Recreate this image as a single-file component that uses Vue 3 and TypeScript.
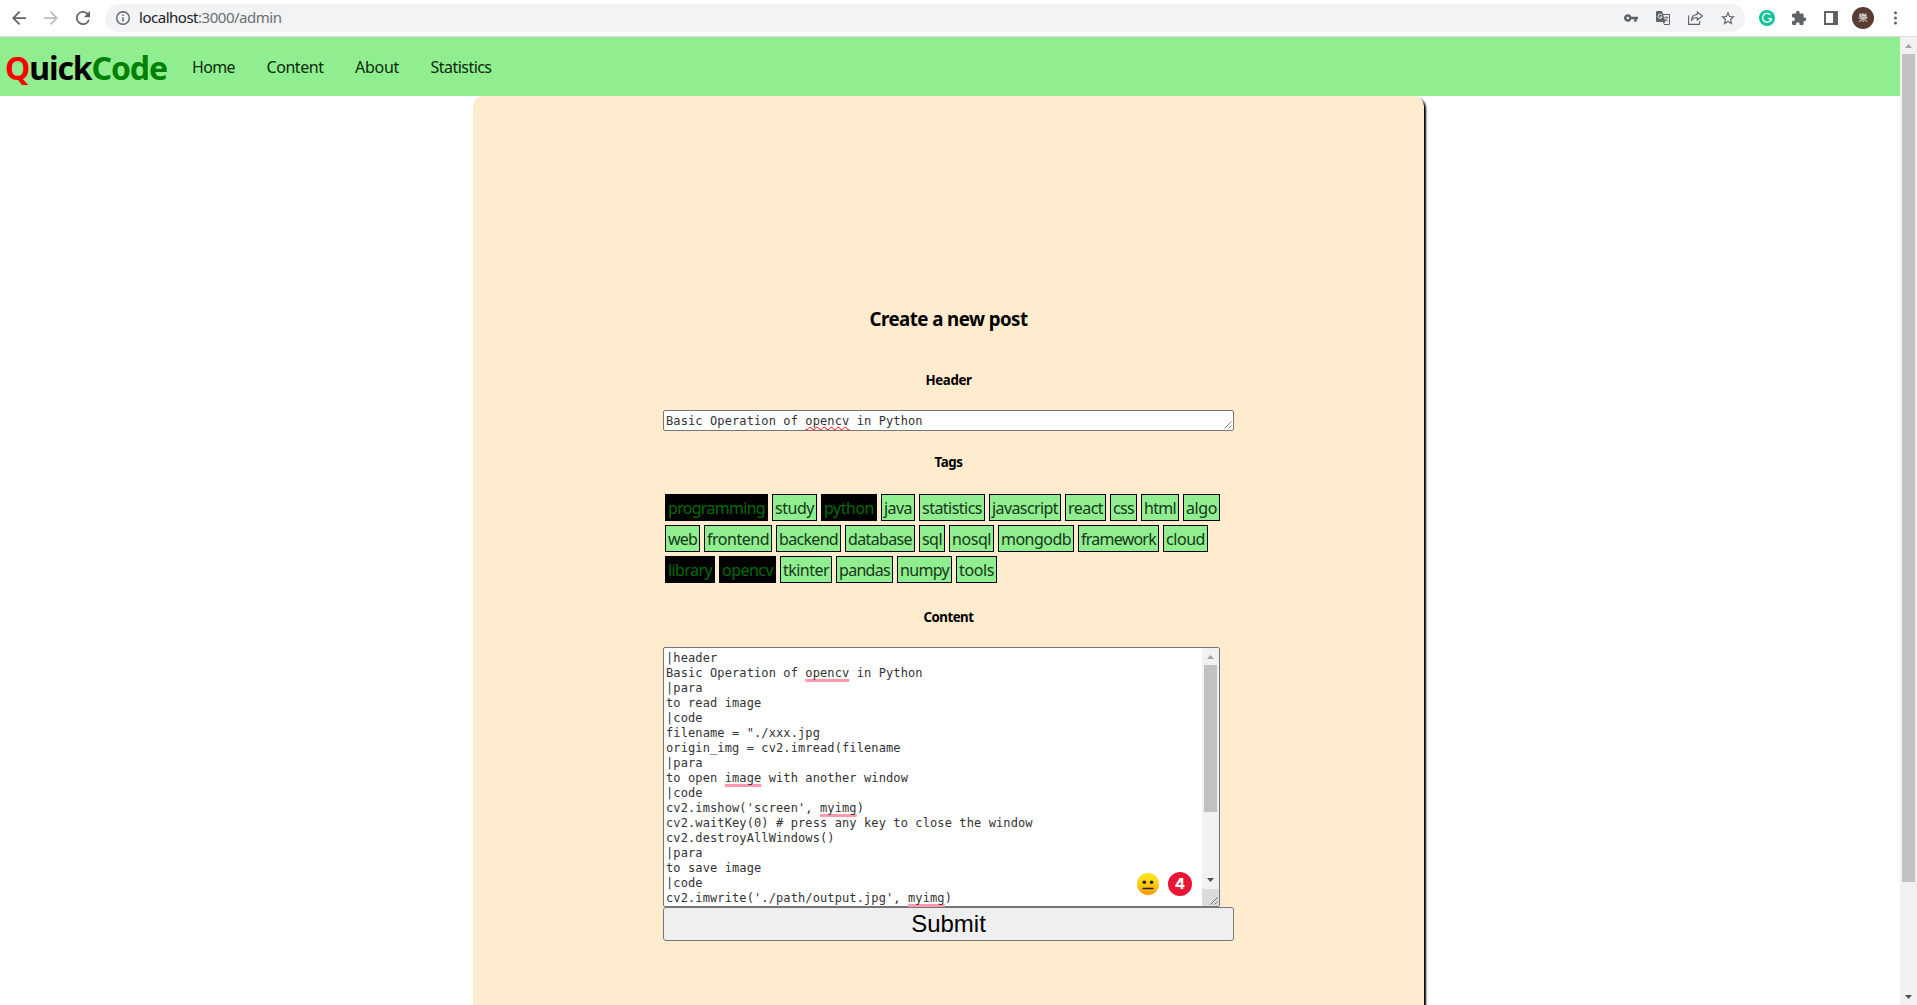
<script setup lang="ts">
import type { Directive } from 'vue'

interface Tag { name: string; width: number; active?: boolean }
interface Piece { text: string; marked?: boolean }

// Spreads the letters of an element so that its text takes the given width.
const vFit: Directive<HTMLElement, number> = {
  mounted(el, { value }) {
    const range = document.createRange()
    range.selectNodeContents(el)
    const natural = range.getBoundingClientRect().width
    const count = (el.textContent ?? '').length
    el.style.letterSpacing = `${(value - natural) / count}px`
  },
}

const links = [
  { name: 'Home', width: 43 },
  { name: 'Content', width: 57 },
  { name: 'About', width: 44 },
  { name: 'Statistics', width: 61 },
]

const tagRows: Tag[][] = [
  [
    { name: 'programming', width: 103, active: true },
    { name: 'study', width: 45 },
    { name: 'python', width: 56, active: true },
    { name: 'java', width: 34 },
    { name: 'statistics', width: 66 },
    { name: 'javascript', width: 72 },
    { name: 'react', width: 41 },
    { name: 'css', width: 27 },
    { name: 'html', width: 38 },
    { name: 'algo', width: 37 },
  ],
  [
    { name: 'web', width: 35 },
    { name: 'frontend', width: 68 },
    { name: 'backend', width: 65 },
    { name: 'database', width: 70 },
    { name: 'sql', width: 26 },
    { name: 'nosql', width: 45 },
    { name: 'mongodb', width: 76 },
    { name: 'framework', width: 81 },
    { name: 'cloud', width: 45 },
  ],
  [
    { name: 'library', width: 50, active: true },
    { name: 'opencv', width: 57, active: true },
    { name: 'tkinter', width: 52 },
    { name: 'pandas', width: 57 },
    { name: 'numpy', width: 55 },
    { name: 'tools', width: 41 },
  ],
]

const lines: Piece[][] = [
  [{ text: '|header' }],
  [{ text: 'Basic Operation of ' }, { text: 'opencv', marked: true }, { text: ' in Python' }],
  [{ text: '|para' }],
  [{ text: 'to read image' }],
  [{ text: '|code' }],
  [{ text: 'filename = "./xxx.jpg' }],
  [{ text: 'origin_img = cv2.imread(filename' }],
  [{ text: '|para' }],
  [{ text: 'to open ' }, { text: 'image', marked: true }, { text: ' with another window' }],
  [{ text: '|code' }],
  [{ text: "cv2.imshow('screen', " }, { text: 'myimg', marked: true }, { text: ')' }],
  [{ text: 'cv2.waitKey(0) # press any key to close the window' }],
  [{ text: 'cv2.destroyAllWindows()' }],
  [{ text: '|para' }],
  [{ text: 'to save image' }],
  [{ text: '|code' }],
  [{ text: "cv2.imwrite('./path/output.jpg', " }, { text: 'myimg', marked: true }, { text: ')' }],
]
</script>

<template>
  <div class="window">
    <header class="toolbar">
      <svg class="ic" viewBox="4 4 16 16"><path d="M20 11H7.83l5.59-5.59L12 4l-8 8 8 8 1.41-1.41L7.83 13H20z" /></svg>
      <svg class="ic faded" viewBox="4 4 16 16"><path d="M12 4l-1.41 1.41L16.17 11H4v2h12.17l-5.58 5.59L12 20l8-8z" /></svg>
      <svg class="ic" viewBox="4 4 16 16"><path d="M17.65 6.35A7.96 7.96 0 0 0 12 4a8 8 0 1 0 7.73 10h-2.08A6 6 0 1 1 12 6c1.66 0 3.14.69 4.22 1.78L13 11h7V4z" /></svg>
      <div class="address">
        <svg class="ic" viewBox="2 2 20 20"><path d="M11 7h2v2h-2zm0 4h2v6h-2zm1-9a10 10 0 1 0 0 20 10 10 0 0 0 0-20zm0 18a8 8 0 1 1 0-16 8 8 0 0 1 0 16z" /></svg>
        <span v-fit="142.5" class="url"><b>localhost</b>:3000/admin</span>
        <svg class="ic" viewBox="1 4 22 16"><path d="M12.65 10A6 6 0 1 0 12.65 14H17v4h4v-4h2v-4zM7 14a2 2 0 1 1 0-4 2 2 0 0 1 0 4z" /></svg>
        <svg class="ic" viewBox="0 0 14 14">
          <path d="M1 0h5l1 3h6q1 0 1 1v9q0 1-1 1H8l-1-3H1q-1 0-1-1V1q0-1 1-1zM7.3 4l2 6.5L8 13h5V4z" fill-rule="evenodd" />
          <path d="M6 4.2A2.1 2.1 0 1 0 6.2 6H4.2" fill="none" stroke="#f1f3f4" />
          <path d="M8.2 6.3h4.3M10.3 5.3v1M11.7 6.3q-.5 2.2-3 4M9 7.5q1 2 3.2 3" fill="none" stroke="#5f6368" stroke-width=".8" />
        </svg>
        <svg class="ic share" viewBox="0 0 15 14">
          <path d="M.6 4.5v8.9h11V10" />
          <path d="M9.3 1l5 4-5 4V6.5q-4.3 0-6 3.5.4-6 6-6.6z" />
        </svg>
        <svg class="ic star" viewBox="2 2 20 19"><path d="M22 9.24l-7.19-.62L12 2 9.19 8.63 2 9.24l5.46 4.73L5.82 21 12 17.27 18.18 21l-1.63-7.03zM12 15.4l-3.76 2.27 1-4.28-3.32-2.88 4.38-.38L12 6.1l1.71 4.04 4.38.38-3.32 2.88 1 4.28z" /></svg>
      </div>
      <svg class="grammar" viewBox="0 0 16 16">
        <circle cx="8" cy="8" r="8" fill="#15c39a" />
        <path d="M11.2 4.8A4.4 4.4 0 1 0 12.3 8.7H9.2M12.2 8.7v2.5" fill="none" stroke="#fff" stroke-width="1.3" />
      </svg>
      <svg class="ic puzzle" viewBox="2 1.5 20.5 20.5"><path d="M20.5 11H19V7a2 2 0 0 0-2-2h-4V3.500a2.500 2.500 0 0 0-5 0V5H4a2 2 0 0 0-2 2v3.800h1.500a2.700 2.700 0 0 1 0 5.400H2V20a2 2 0 0 0 2 2h3.800v-1.500a2.700 2.700 0 0 1 5.400 0V22H17a2 2 0 0 0 2-2v-4h1.500a2.500 2.500 0 0 0 0-5z" /></svg>
      <svg class="ic panel" viewBox="0 0 14 14"><path d="M0 0h14v14H0zM2 2v10h7V2z" fill-rule="evenodd" /></svg>
      <span class="avatar">樂</span>
      <svg class="dots" viewBox="0 0 3 14"><circle cx="1.500" cy="1.700" r="1.500" /><circle cx="1.500" cy="6.900" r="1.500" /><circle cx="1.500" cy="12" r="1.500" /></svg>
    </header>

    <div class="viewport">
      <div class="page">
        <nav class="nav">
          <h1 v-fit="162" class="logo"><span class="red">Q</span>uick<span class="green">Code</span></h1>
          <a v-for="l in links" :key="l.name" v-fit="l.width">{{ l.name }}</a>
        </nav>
        <main class="card">
          <h3><span v-fit="158">Create a new post</span></h3>
          <h5 class="first"><span v-fit="46">Header</span></h5>
          <div class="field title">
            <span>Basic Operation of <u>opencv</u> in Python</span>
            <svg class="grip" viewBox="0 0 8 8"><path d="M.5 7.500l7-7M4.500 7.500l3-3" /></svg>
          </div>
          <h5 class="second"><span v-fit="28">Tags</span></h5>
          <div class="tags">
            <div v-for="(row, i) in tagRows" :key="i" class="row">
              <span
                v-for="t in row"
                :key="t.name"
                class="tag"
                :class="{ active: t.active }"
                :style="{ width: t.width + 'px' }"
              ><span v-fit="t.width - 6">{{ t.name }}</span></span>
            </div>
          </div>
          <h5 class="third"><span v-fit="50">Content</span></h5>
          <div class="field body">
            <div class="lines">
              <div v-for="(line, i) in lines" :key="i" class="line"><span v-for="(p, j) in line" :key="j" :class="{ marked: p.marked }">{{ p.text }}</span></div>
            </div>
            <div class="scroll">
              <svg class="arrow" viewBox="0 0 17 17"><path d="M5 11h7L8.500 7z" fill="#a3a3a3" /></svg>
              <div class="thumb inner"></div>
              <svg class="arrow low" viewBox="0 0 17 17"><path d="M5 6h7l-3.500 4z" fill="#505050" /></svg>
              <div class="corner"><svg class="grip" viewBox="0 0 8 8"><path d="M.5 7.500l7-7M4.500 7.500l3-3" /></svg></div>
            </div>
            <div class="badges">
              <svg class="face" viewBox="0 0 22 22">
                <defs><linearGradient id="skin" x1="0" y1="0" x2="0" y2="1"><stop offset="0" stop-color="#ffe71c" /><stop offset=".5" stop-color="#ffcf15" /><stop offset="1" stop-color="#ff9502" /></linearGradient></defs>
                <circle cx="11" cy="11" r="11" fill="url(#skin)" />
                <circle cx="7.300" cy="9.200" r="1.800" fill="#222" /><circle cx="14.600" cy="9.200" r="1.800" fill="#222" />
                <path d="M5.500 15.500h11" stroke="#222" stroke-width="1.500" />
              </svg>
              <span class="count">4</span>
            </div>
          </div>
          <button type="button">Submit</button>
        </main>
      </div>
      <div class="scroll">
        <svg class="arrow" viewBox="0 0 17 17"><path d="M5 11h7L8.500 7z" fill="#a3a3a3" /></svg>
        <div class="thumb outer"></div>
        <svg class="arrow low" viewBox="0 0 17 17"><path d="M5 7h7l-3.500 4z" fill="#505050" /></svg>
      </div>
    </div>
  </div>
</template>

<style>
body { margin: 0; overflow: hidden; }
</style>

<style scoped>
.window { display: flex; flex-direction: column; width: 1917px; height: 1005px; overflow: hidden; background: #fff; color: #000; font-family: "Noto Sans", "Open Sans", sans-serif; }
svg { display: block; flex: none; }
.toolbar { display: flex; align-items: center; box-sizing: border-box; height: 37px; padding: 0 20px 1px 12px; border-bottom: 1px solid #dadce0; gap: 18px; }
.ic { width: 14px; height: 14px; fill: #5f6368; }
.faded { fill: #babcbe; }
.address { display: flex; align-items: center; flex: 1; height: 28px; box-sizing: border-box; padding: 0 10.5px 0 11px; margin-left: -3px; border-radius: 14px; background: #f1f3f4; gap: 18px; }
.url { flex: 1; margin-left: -9px; font-size: 15px; line-height: 26px; height: 28px; color: #6b6f73; white-space: nowrap; }
.url b { color: #202124; font-weight: 400; }
.share { width: 15px; fill: none; stroke: #5f6368; stroke-width: 1.1; }
.grammar { width: 16px; height: 16px; margin-left: -4px; }
.puzzle { margin-left: -1px; }
.avatar { width: 22px; height: 22px; flex: none; margin-left: -4px; border-radius: 50%; background: #5b3c33; color: #fff; font: 9px/21px "Noto Sans CJK TC", sans-serif; text-align: center; }
.dots { width: 3px; height: 14px; margin-left: 2px; fill: #5f6368; }
.viewport { display: flex; flex: 1; min-height: 0; }
.page { flex: 1; overflow: hidden; }
.nav { display: flex; align-items: flex-start; height: 59px; padding-left: 5px; background: #90ee90; }
.logo { width: 163px; margin: 0 24px 0 0; font-size: 32px; line-height: 61px; white-space: nowrap; }
.red { color: red; }
.green { color: green; }
.nav a { margin-right: 31.5px; font-size: 16px; line-height: 61px; color: #0b2b0b; white-space: nowrap; }
.card { display: flex; flex-direction: column; box-sizing: border-box; width: 951px; height: 1100px; margin-left: 473px; padding: 210px 190px 0; border-radius: 10px; background: #ffebcd; box-shadow: 2px 2px 2px #000; }
h3, h5 { margin: 0; text-align: center; white-space: nowrap; }
h3 { height: 26px; font-size: 18.72px; line-height: 26px; }
h5 { height: 18px; font-size: 13.28px; line-height: 18px; }
.first { margin: 39px 0 21px; }
.second { margin: 22px 0 21px; }
.third { margin: 23px 0 21px; }
.field { display: flex; position: relative; box-sizing: border-box; border: 1px solid #767676; border-radius: 2px; background: #fff; font: 12px/15px "DejaVu Sans Mono", monospace; letter-spacing: 0.108px; white-space: pre; color: #333; }
.title { align-items: flex-end; justify-content: space-between; height: 21px; padding: 0 1px 1px 2px; }
.title u { text-decoration: underline wavy red 1px; text-decoration-skip-ink: none; text-underline-offset: 1px; }
.grip { width: 8px; height: 8px; fill: none; stroke: #555; stroke-width: 0.8; }
.tags { height: 93px; }
.row { display: flex; gap: 4px; padding: 2px; }
.tag { box-sizing: border-box; flex: none; height: 27px; padding-left: 2px; border: 1px solid #000; background: #90ee90; font-size: 16px; line-height: 26px; color: #173817; white-space: nowrap; }
.active { background: #000; color: #006c00; }
.body { width: 557px; height: 260px; }
.lines { flex: 1; padding: 3px 2px 0; }
.line { height: 15px; }
.marked { text-decoration: underline 2.5px #ff9ab0; text-decoration-skip-ink: none; text-underline-offset: 2px; }
.scroll { display: flex; flex-direction: column; width: 17px; flex: none; background: #f1f1f1; }
.arrow { width: 17px; height: 17px; }
.low { margin-top: auto; }
.thumb { width: 13px; margin-left: 2px; background: #c1c1c1; }
.inner { height: 147px; }
.outer { height: 828px; }
.corner { display: flex; align-items: flex-end; justify-content: flex-end; box-sizing: border-box; height: 17px; padding: 1px; background: #dcdcdc; }
.badges { position: absolute; right: 27px; bottom: 10px; display: flex; align-items: center; gap: 9px; }
.face { width: 22px; height: 22px; }
.count { width: 24px; height: 24px; border-radius: 50%; background: #eb1536; color: #fff; font: 800 15px/24px Inter, sans-serif; text-align: center; }
button { height: 34px; padding: 0; border: 1px solid #767676; border-radius: 3px; background: #efefef; color: #000; font: 24px "Liberation Sans", Arial, sans-serif; }
</style>
